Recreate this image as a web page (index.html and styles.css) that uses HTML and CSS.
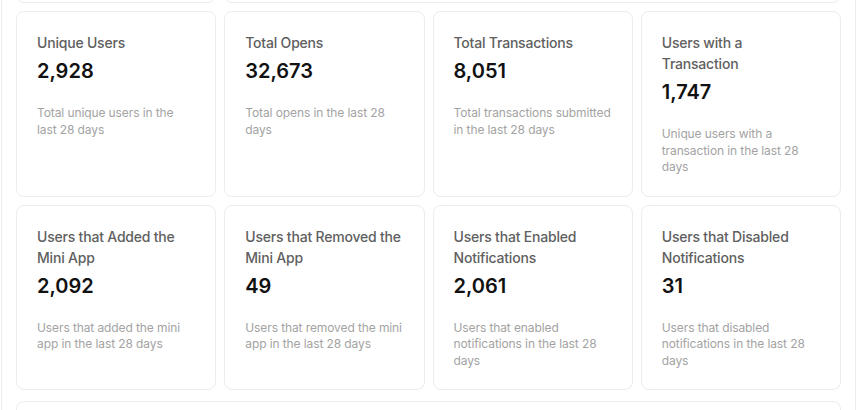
FILE: index.html
```html
<!DOCTYPE html>
<html lang="en">
<head>
<meta charset="utf-8">
<title>Mini App Analytics</title>
<link rel="stylesheet" href="styles.css">
</head>
<body>
<div class="panel">
  <div class="grid">
    <div class="card card-top"></div>
    <div class="card card-top span-3"></div>

    <div class="card">
      <div class="label">Unique Users</div>
      <div class="value">2,928</div>
      <div class="desc">Total unique users in the last 28 days</div>
    </div>
    <div class="card">
      <div class="label">Total Opens</div>
      <div class="value">32,673</div>
      <div class="desc">Total opens in the last 28 days</div>
    </div>
    <div class="card">
      <div class="label">Total Transactions</div>
      <div class="value">8,051</div>
      <div class="desc">Total transactions submitted in the last 28 days</div>
    </div>
    <div class="card">
      <div class="label">Users with a Transaction</div>
      <div class="value">1,747</div>
      <div class="desc">Unique users with a transaction in the last 28 days</div>
    </div>

    <div class="card">
      <div class="label">Users that Added the Mini App</div>
      <div class="value">2,092</div>
      <div class="desc">Users that added the mini app in the last 28 days</div>
    </div>
    <div class="card">
      <div class="label">Users that Removed the Mini App</div>
      <div class="value">49</div>
      <div class="desc">Users that removed the mini app in the last 28 days</div>
    </div>
    <div class="card">
      <div class="label">Users that Enabled Notifications</div>
      <div class="value">2,061</div>
      <div class="desc">Users that enabled notifications in the last 28 days</div>
    </div>
    <div class="card">
      <div class="label">Users that Disabled Notifications</div>
      <div class="value">31</div>
      <div class="desc">Users that disabled notifications in the last 28 days</div>
    </div>
  </div>
  <div class="card card-bottom"></div>
</div>
</body>
</html>
```

FILE: styles.css
```css
html, body {
  margin: 0;
  padding: 0;
  background: #ffffff;
}

body {
  font-family: Inter, "Noto Sans", "Liberation Sans", sans-serif;
  color: #111111;
  overflow: hidden;
}

.panel {
  margin: -81px 1px 0 1px;
  border-left: 1px solid #ededed;
  border-right: 1px solid #ededed;
  padding: 0 14px 40px 14px;
  display: flex;
  flex-direction: column;
  gap: 11px;
}

.grid {
  display: grid;
  grid-template-columns: repeat(4, 1fr);
  gap: 8px;
}

.card {
  background: #ffffff;
  border: 1px solid #ececec;
  border-radius: 8px;
  padding: 20px;
  display: flex;
  flex-direction: column;
  min-width: 0;
}

.card-top {
  height: 84px;
  padding: 0;
  box-sizing: border-box;
}

.span-3 {
  grid-column: span 3;
}

.card-bottom {
  height: 120px;
  padding: 0;
}

.label {
  font-size: 14px;
  line-height: 21px;
  font-weight: 500;
  letter-spacing: -0.2px;
  color: #606060;
}

.value {
  margin-top: 4px;
  font-size: 20px;
  line-height: 28px;
  font-weight: 600;
  color: #111111;
}

.desc {
  margin-top: 20px;
  font-size: 12px;
  line-height: 16.5px;
  letter-spacing: -0.1px;
  color: #a3a3a3;
}
```
